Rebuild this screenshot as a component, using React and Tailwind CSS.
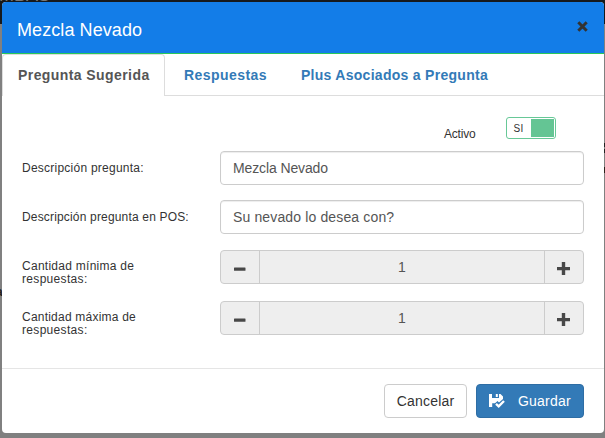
import React from 'react';

function Tab({ children, className }) {
  return (
    <div className={`flex h-[42px] items-center whitespace-nowrap text-[14px] font-bold leading-5 ${className}`}>
      {children}
    </div>
  );
}

function TextField({ label, value, labelClass, valueClass }) {
  return (
    <div className="flex h-[34px] items-center">
      <label className={`w-[198px] shrink-0 whitespace-nowrap pt-px text-[12px] leading-[13px] text-[#333] ${labelClass}`}>{label}</label>
      <div className={`flex h-[34px] w-[364px] items-center rounded border border-[#ccc] bg-white px-3 pt-px text-[14px] text-[#555] shadow-[inset_0_1px_1px_rgba(0,0,0,0.075)] ${valueClass}`}>
        {value}
      </div>
    </div>
  );
}

function Stepper({ first, value, labelClass }) {
  return (
    <div className="flex h-[34px]">
      <div className={`w-[198px] shrink-0 pt-[10px] text-[12px] leading-[13px] text-[#333] ${labelClass}`}>
        {first}
        <br />
        <span className="tracking-[0.32px]">respuestas:</span>
      </div>
      <div className="flex h-[34px] w-[364px] overflow-hidden rounded border border-[#ccc] bg-[#eee] text-[14px] text-[#555]">
        <button className="flex w-[39px] items-center justify-center border-r border-[#ccc] pt-[3px]">
          <svg width="12" height="14" viewBox="0 0 12 14" fill="#484848">
            <rect x="0" y="5.5" width="11.5" height="3.2" rx="0.5" />
          </svg>
        </button>
        <div className="flex flex-1 items-center justify-center">{value}</div>
        <button className="flex w-[39px] items-center justify-center border-l border-[#ccc] pr-[2px] pt-[3px]">
          <svg width="13" height="13" viewBox="0 0 13 13" fill="#484848">
            <path d="M4.8 0h3.4v5H13v3.2H8.2V13H4.8V8.2H0V5h4.8z" />
          </svg>
        </button>
      </div>
    </div>
  );
}

export default function App() {
  return (
    <div className="relative h-[438px] w-[605px] overflow-hidden bg-[#808080] font-['Liberation_Sans',Arial,sans-serif]">
      <div className="absolute inset-x-0 top-0 h-[24px] overflow-hidden bg-[#16191c]">
        <span className="absolute -left-px -top-[15px] text-[18px] leading-[20px] text-[#777]">MBAS</span>
      </div>
      <span className="absolute -left-[4px] top-[285px] text-[12px] font-bold leading-[14px] text-[#222]">a</span>
      <div className="absolute right-0 top-[143px] h-[4px] w-px bg-[#222]" />
      <div className="absolute right-0 top-[149px] h-[4px] w-px bg-[#222]" />
      <div className="absolute right-0 top-[167px] h-[6px] w-px bg-[#2d211b]" />

      <div className="absolute left-[2px] top-[2px] flex h-[431px] w-[602px] flex-col overflow-hidden rounded-[4px] bg-white">
        <header className="flex h-[52px] shrink-0 items-center justify-between border-b border-[#28c85a] bg-[#137de8] pl-[15px] pr-[16px]">
          <h4 className="pt-[5px] text-[18px] leading-5 tracking-[0.08px] text-white">Mezcla Nevado</h4>
          <svg className="-mt-[3px]" width="11" height="11" viewBox="0 0 11 11">
            <path d="M1.3 1.3l8.4 8.4M9.7 1.3l-8.4 8.4" stroke="#333" strokeWidth="3" />
          </svg>
        </header>

        <nav className="flex h-[42px] shrink-0 border-b border-[#ddd]">
          <Tab className="w-[163px] rounded-t border border-b-0 border-[#ddd] bg-white pb-[2px] pl-[15px] tracking-[0.42px] text-[#555]">
            Pregunta Sugerida
          </Tab>
          <Tab className="w-[118px] pl-[19px] tracking-[0.45px] text-[#337ab7]">Respuestas</Tab>
          <Tab className="pl-[18px] tracking-[0.28px] text-[#337ab7]">Plus Asociados a Pregunta</Tab>
        </nav>

        <main className="flex h-[272px] shrink-0 flex-col pl-[20px] pt-[21px]">
          <div className="flex h-[34px] shrink-0 items-start pl-[422px]">
            <span className="w-[62px] pt-[11px] text-[12px] leading-[13px] tracking-[-0.2px] text-[#333]">Activo</span>
            <div className="flex h-[22px] w-[50px] rounded-[3px] border border-[#67c897] bg-white p-px">
              <span className="flex flex-1 items-center justify-center pr-[2px] text-[10px] tracking-[0.3px] text-[#333]">SI</span>
              <span className="w-[23px] bg-[#64c594]" />
            </div>
          </div>
          <TextField label="Descripción pregunta:" value="Mezcla Nevado" labelClass="tracking-[0.24px]" valueClass="tracking-[-0.12px]" />
          <div className="h-[15px] shrink-0" />
          <TextField label="Descripción pregunta en POS:" value="Su nevado lo desea con?" labelClass="tracking-[0.17px]" valueClass="tracking-[0.14px]" />
          <div className="h-[16px] shrink-0" />
          <Stepper first="Cantidad mínima de" value="1" labelClass="tracking-[0.27px]" />
          <div className="h-[17px] shrink-0" />
          <Stepper first="Cantidad máxima de" value="1" labelClass="tracking-[0.22px]" />
        </main>

        <footer className="flex flex-1 items-start justify-end gap-[9px] border-t border-[#e5e5e5] pr-[20px] pt-[15px] text-[14px]">
          <button className="h-[34px] w-[83px] rounded border border-[#ccc] bg-white tracking-[0.2px] text-[#333]">Cancelar</button>
          <button className="flex h-[34px] w-[108px] items-center rounded border border-[#2e6da4] bg-[#337ab7] pl-[12px] text-white">
            <svg width="16" height="14" viewBox="0 0 16 14" fill="#fff">
              <path d="M0 0h3v4h7V0h1.5L14 2.5V5l-4 3.5L8.5 7 6 9.2H3.2V13H0z" />
              <rect x="6.8" y="0" width="2" height="3" />
              <path d="M7 9.8l2.7 2.5L15 7" fill="none" stroke="#fff" strokeWidth="2.4" />
            </svg>
            <span className="ml-[13px] tracking-[0.2px]">Guardar</span>
          </button>
        </footer>
      </div>
    </div>
  );
}
